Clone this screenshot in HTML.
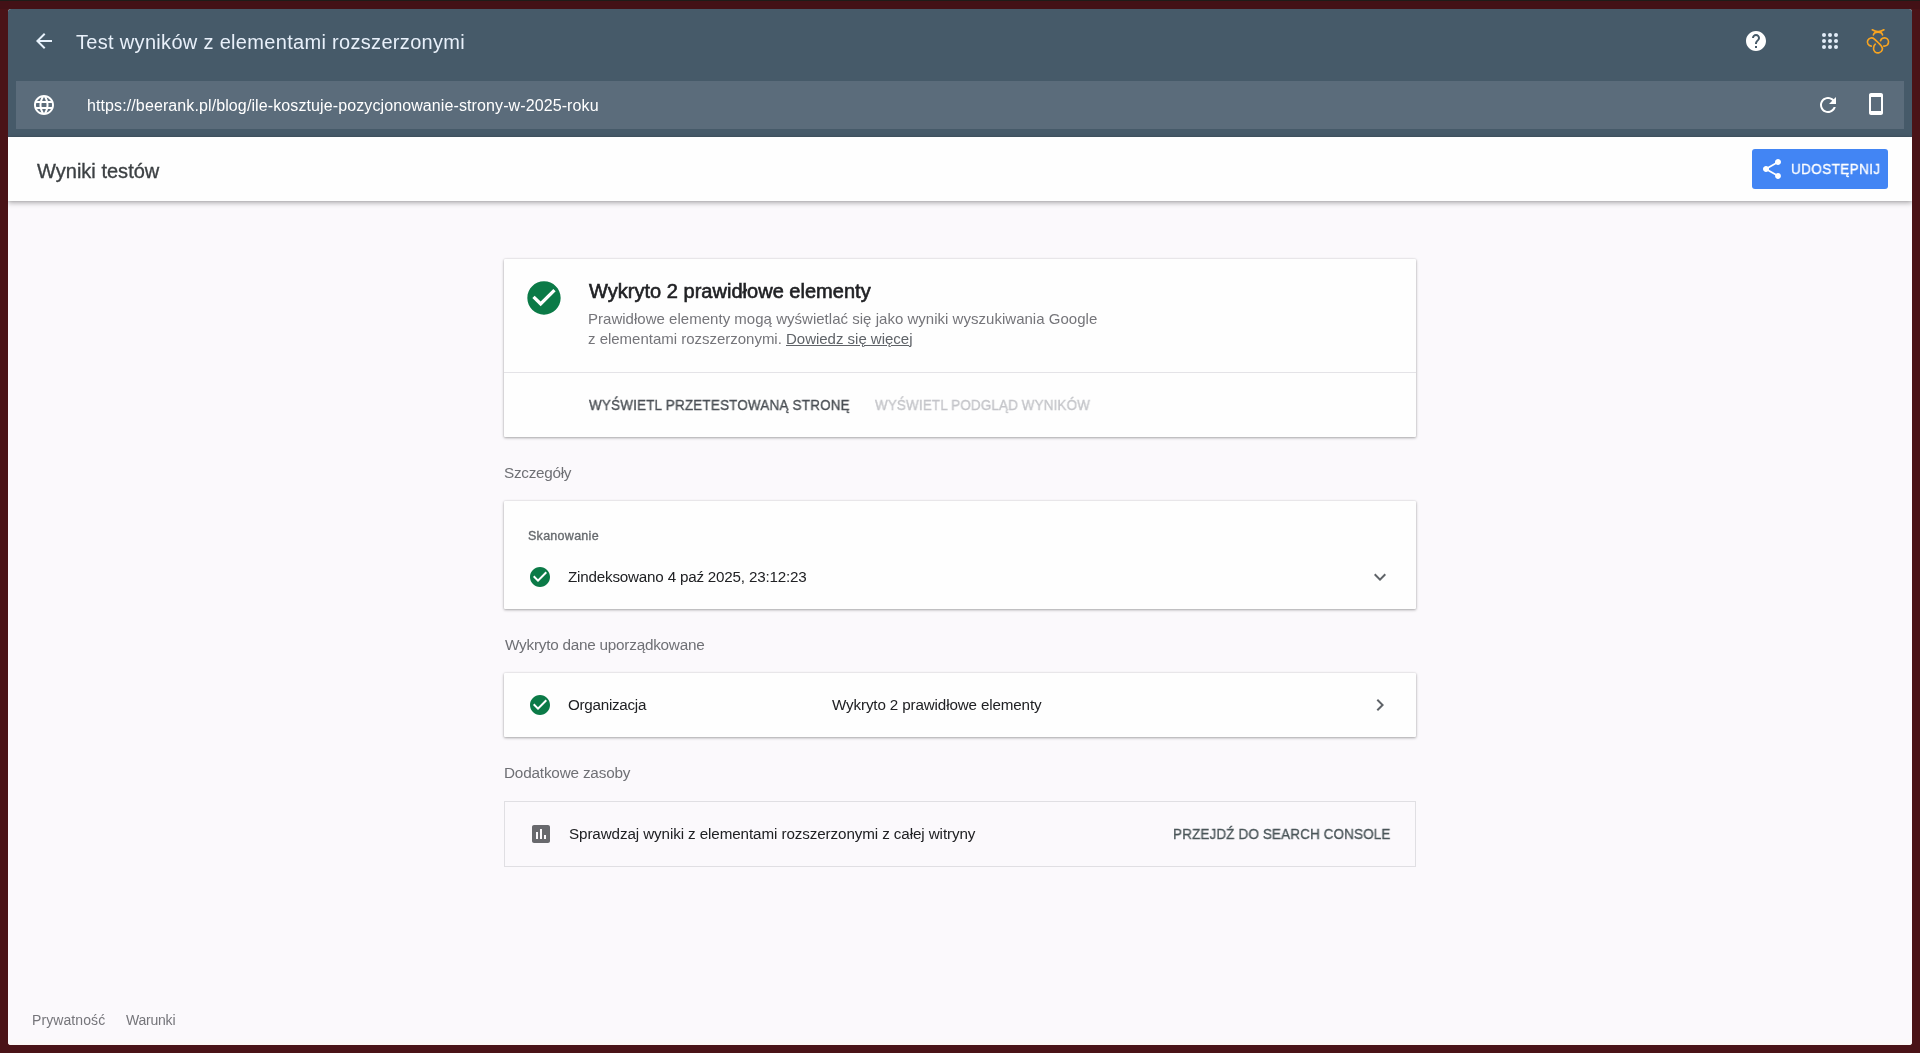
<!DOCTYPE html>
<html lang="pl">
<head>
<meta charset="utf-8">
<title>Test wyników z elementami rozszerzonymi</title>
<style>
*{box-sizing:border-box;margin:0;padding:0}
html,body{width:1920px;height:1053px;overflow:hidden}
body{background:#4a1317;font-family:"Liberation Sans",sans-serif;position:relative;color:#202124}
.topband{position:absolute;left:0;top:0;width:1920px;height:9px;background:#431116}
.topstrip{position:absolute;left:0;top:0;width:1920px;height:1px;background:#1e1c18}
.botwarm{position:absolute;left:0;top:1030px;width:1904px;height:6px;background:linear-gradient(#fbf9fb,#fcf8f5)}
.page{position:absolute;left:8px;top:9px;width:1904px;height:1036px;background:#fbf9fc;border-radius:3px;overflow:hidden}
.abs{position:absolute;white-space:nowrap;line-height:1;will-change:transform}
.hdr{position:absolute;left:0;top:0;width:1904px;height:128px;background:#465a69}
.urlbar{position:absolute;left:8px;top:72px;width:1888px;height:48px;background:#5b6c7b}
.sub{position:absolute;left:0;top:128px;width:1904px;height:64px;background:#fefefe;box-shadow:0 2px 5px rgba(0,0,0,.3),0 0 2px rgba(0,0,0,.12)}
.btn{position:absolute;left:1744px;top:140px;width:136px;height:40px;background:#4285f4;border-radius:3px}
.card{position:absolute;left:496px;width:912px;background:#fefefe;border-radius:1px;box-shadow:0 1px 3px rgba(0,0,0,.32),0 0 2px rgba(0,0,0,.12)}
.flat{position:absolute;left:496px;width:912px;border:1px solid #e0dfe3;background:#fbf9fc}
svg{position:absolute;display:block;overflow:visible}
.med{-webkit-text-stroke:.35px currentColor}
.med2{-webkit-text-stroke:.6px currentColor}
</style>
</head>
<body>
<div class="topband"></div><div class="topstrip"></div>
<div class="page">
  <div class="botwarm"></div>
  <div class="hdr"></div>
  <div class="urlbar"></div>
  <div class="sub"></div>
  <div class="btn"></div>

  <!-- header icons (coords relative to .page: x-8, y-9) -->
  <svg style="left:24px;top:20px" width="24" height="24" viewBox="0 0 24 24"><path fill="#e8f2fc" d="M20 11H7.83l5.59-5.59L12 4l-8 8 8 8 1.41-1.41L7.83 13H20v-2z"/></svg>
  <div class="abs" id="t1" style="left:68px;top:23px;font-size:20px;color:#e8f0fa;letter-spacing:0.315px">Test wyników z elementami rozszerzonymi</div>

  <svg style="left:1736px;top:20px" width="24" height="24" viewBox="0 0 24 24"><path fill="#fff" d="M12 2C6.48 2 2 6.48 2 12s4.48 10 10 10 10-4.48 10-10S17.520 2 12 2zm1 17h-2v-2h2v2zm2.070-7.750l-.9.92C13.450 12.900 13 13.500 13 15h-2v-.5c0-1.100.45-2.100 1.170-2.830l1.240-1.260c.37-.36.59-.86.59-1.410 0-1.100-.9-2-2-2s-2 .9-2 2H8c0-2.210 1.790-4 4-4s4 1.790 4 4c0 .88-.36 1.680-.93 2.250z"/></svg>
  <svg style="left:1810px;top:20px" width="24" height="24" viewBox="0 0 24 24" fill="#e3edf8"><circle cx="6" cy="6" r="2"/><circle cx="12" cy="6" r="2"/><circle cx="18" cy="6" r="2"/><circle cx="6" cy="12" r="2"/><circle cx="12" cy="12" r="2"/><circle cx="18" cy="12" r="2"/><circle cx="6" cy="18" r="2"/><circle cx="12" cy="18" r="2"/><circle cx="18" cy="18" r="2"/></svg>
  <!-- bee avatar -->
  <svg id="bee" style="left:1850px;top:13px" width="40" height="40" viewBox="0 0 40 40" fill="none" stroke="#f8a420" stroke-width="1.650" stroke-linecap="round" stroke-linejoin="round"><path d="M14.300 7.800Q20 11.600 25.900 7.800"/><path d="M15.400 12.900Q16 10.100 20 10.100Q24 10.100 24.500 12.900"/><path d="M13.300 24.090A4.100 4.100 0 1 1 16.400 17.100C18.500 19.200 22 22 23.360 24.160A4.450 4.100 0 1 1 15.570 26.090C15.700 24.500 16.300 23 17.300 22.200"/><path d="M22.550 18.600A4.100 4.100 0 1 1 25.700 24.040"/></svg>

  <svg style="left:24px;top:84px" width="24" height="24" viewBox="0 0 24 24"><path fill="#fff" d="M11.990 2C6.470 2 2 6.480 2 12s4.470 10 9.990 10C17.520 22 22 17.520 22 12S17.520 2 11.990 2zm6.930 6h-2.950c-.32-1.250-.78-2.450-1.380-3.560 1.840.63 3.370 1.910 4.330 3.560zM12 4.040c.83 1.200 1.480 2.530 1.910 3.960h-3.820c.43-1.430 1.080-2.760 1.910-3.960zM4.260 14C4.100 13.360 4 12.690 4 12s.1-1.360.26-2h3.380c-.08.66-.14 1.320-.14 2 0 .68.06 1.340.14 2H4.260zm.82 2h2.950c.32 1.250.78 2.450 1.380 3.560-1.840-.63-3.370-1.900-4.330-3.560zm2.950-8H5.080c.96-1.660 2.490-2.930 4.330-3.560C8.810 5.550 8.350 6.750 8.030 8zM12 19.960c-.83-1.200-1.480-2.530-1.910-3.960h3.820c-.43 1.430-1.080 2.760-1.910 3.960zM14.340 14H9.660c-.09-.66-.16-1.320-.16-2 0-.68.07-1.350.16-2h4.680c.09.65.16 1.320.16 2 0 .68-.07 1.340-.16 2zm.25 5.560c.6-1.110 1.060-2.310 1.380-3.560h2.950c-.96 1.650-2.490 2.930-4.330 3.560zM16.360 14c.08-.66.14-1.320.14-2 0-.68-.06-1.340-.14-2h3.380c.16.64.26 1.310.26 2s-.1 1.360-.26 2h-3.380z"/></svg>
  <div class="abs" id="t2" style="left:79px;top:89px;font-size:16px;color:#ffffff;letter-spacing:0.106px">https://beerank.pl/blog/ile-kosztuje-pozycjonowanie-strony-w-2025-roku</div>
  <svg style="left:1808px;top:84px" width="24" height="24" viewBox="0 0 24 24"><path fill="#fff" d="M17.650 6.350C16.200 4.900 14.210 4 12 4c-4.420 0-7.990 3.580-7.990 8s3.570 8 7.990 8c3.730 0 6.840-2.550 7.730-6h-2.080c-.82 2.330-3.040 4-5.650 4-3.310 0-6-2.690-6-6s2.690-6 6-6c1.660 0 3.140.69 4.220 1.780L13 11h7V4l-2.350 2.350z"/></svg>
  <svg style="left:1856px;top:83px" width="24" height="24" viewBox="0 0 24 24"><path fill="#fff" d="M17 1.010L7 1c-1.100 0-1.990.9-1.990 2v18c0 1.100.89 2 1.990 2h10c1.100 0 2-.9 2-2V3c0-1.100-.9-1.990-2-1.990zM17 19H7V5h10v14z"/></svg>

  <div class="abs med" id="t3" style="left:29px;top:152px;font-size:20px;color:#3c4043;letter-spacing:0.019px">Wyniki testów</div>
  <svg style="left:1751.500px;top:148px" width="24" height="24" viewBox="0 0 24 24"><path fill="#fff" d="M18 16.080c-.76 0-1.440.3-1.960.77L8.910 12.700c.05-.23.09-.46.09-.7s-.04-.47-.09-.7l7.050-4.110c.54.5 1.250.81 2.040.81 1.660 0 3-1.340 3-3s-1.340-3-3-3-3 1.340-3 3c0 .24.04.47.09.7L8.040 9.810C7.500 9.310 6.790 9 6 9c-1.660 0-3 1.340-3 3s1.340 3 3 3c.79 0 1.500-.31 2.040-.81l7.120 4.160c-.05.21-.08.43-.08.65 0 1.610 1.310 2.920 2.920 2.920 1.610 0 2.920-1.310 2.920-2.920s-1.310-2.920-2.920-2.920z"/></svg>
  <div class="abs med" id="t4" style="left:1783px;top:153px;font-size:14.6px;color:#ffffff;letter-spacing:0.491px;transform:scaleX(0.92);transform-origin:0 0">UDOSTĘPNIJ</div>

  <!-- main card -->
  <div class="card" style="top:250px;height:178px"></div>
  <div style="position:absolute;left:496px;top:363px;width:912px;height:1px;background:#e4e3e7"></div>
  <svg style="left:516px;top:268.900px" width="40" height="40" viewBox="0 0 24 24"><circle cx="12" cy="12" r="8" fill="#fff"/><path fill="#0b7a47" d="M12 2C6.480 2 2 6.480 2 12s4.480 10 10 10 10-4.480 10-10S17.520 2 12 2zm-2 15l-5-5 1.410-1.410L10 14.170l7.590-7.590L19 8l-9 9z"/></svg>
  <div class="abs med2" id="t5" style="left:581px;top:272px;font-size:20px;color:#202124;letter-spacing:0.023px">Wykryto 2 prawidłowe elementy</div>
  <div class="abs" id="t6" style="left:580px;top:302px;font-size:15px;color:#75757a;letter-spacing:0.022px">Prawidłowe elementy mogą wyświetlać się jako wyniki wyszukiwania Google</div>
  <div class="abs" id="t7" style="left:580px;top:322px;font-size:15px;color:#75757a;letter-spacing:-0.014px">z elementami rozszerzonymi. <span id="t7b" style="text-decoration:underline;color:#5f6368">Dowiedz się więce<span style="letter-spacing:0">j</span></span></div>
  <div class="abs med" id="t8" style="left:581px;top:389px;font-size:14.6px;color:#4a4f54;letter-spacing:0.232px;transform:scaleX(0.92);transform-origin:0 0">WYŚWIETL PRZETESTOWANĄ STRONĘ</div>
  <div class="abs med" id="t9" style="left:867px;top:389px;font-size:14.6px;color:#c4c5c9;letter-spacing:0.166px;transform:scaleX(0.92);transform-origin:0 0">WYŚWIETL PODGLĄD WYNIKÓW</div>

  <div class="abs" id="t10" style="left:496px;top:456px;font-size:15.3px;color:#6f7075;letter-spacing:-0.283px">Szczegóły</div>
  <div class="card" style="top:492px;height:108px"></div>
  <div class="abs med" id="t11" style="left:520px;top:521px;font-size:12.5px;color:#666a6e;letter-spacing:0.278px">Skanowanie</div>
  <svg style="left:520px;top:556px" width="24" height="24" viewBox="0 0 24 24"><circle cx="12" cy="12" r="8" fill="#fff"/><path fill="#0b7a47" d="M12 2C6.480 2 2 6.480 2 12s4.480 10 10 10 10-4.480 10-10S17.520 2 12 2zm-2 15l-5-5 1.410-1.410L10 14.170l7.590-7.590L19 8l-9 9z"/></svg>
  <div class="abs" id="t12" style="left:560px;top:560px;font-size:15.2px;color:#202124;letter-spacing:-0.193px">Zindeksowano 4 paź 2025, 23:12:23</div>
  <svg style="left:1360px;top:556px" width="24" height="24" viewBox="0 0 24 24"><path fill="#5f6368" d="M16.590 8.590L12 13.170 7.410 8.590 6 10l6 6 6-6z"/></svg>

  <div class="abs" id="t13" style="left:497px;top:628px;font-size:15.3px;color:#6f7075;letter-spacing:-0.237px">Wykryto dane uporządkowane</div>
  <div class="card" style="top:664px;height:64px"></div>
  <svg style="left:520px;top:684px" width="24" height="24" viewBox="0 0 24 24"><circle cx="12" cy="12" r="8" fill="#fff"/><path fill="#0b7a47" d="M12 2C6.480 2 2 6.480 2 12s4.480 10 10 10 10-4.480 10-10S17.520 2 12 2zm-2 15l-5-5 1.410-1.410L10 14.170l7.590-7.590L19 8l-9 9z"/></svg>
  <div class="abs" id="t14" style="left:560px;top:688px;font-size:15.2px;color:#202124;letter-spacing:-0.262px">Organizacja</div>
  <div class="abs" id="t15" style="left:824px;top:688px;font-size:15.2px;color:#202124;letter-spacing:-0.137px">Wykryto 2 prawidłowe elementy</div>
  <svg style="left:1360px;top:684px" width="24" height="24" viewBox="0 0 24 24"><path fill="#5f6368" d="M10 6L8.590 7.410 13.170 12l-4.580 4.590L10 18l6-6z"/></svg>

  <div class="abs" id="t16" style="left:496px;top:756px;font-size:15.3px;color:#6f7075;letter-spacing:-0.188px">Dodatkowe zasoby</div>
  <div class="flat" style="top:792px;height:66px"></div>
  <svg style="left:521px;top:813px" width="24" height="24" viewBox="0 0 24 24"><path fill="#68696d" d="M19 3H5c-1.100 0-2 .9-2 2v14c0 1.100.9 2 2 2h14c1.100 0 2-.9 2-2V5c0-1.100-.9-2-2-2zM9 17H7v-7h2v7zm4 0h-2V7h2v10zm4 0h-2v-4h2v4z"/></svg>
  <div class="abs" id="t17" style="left:561px;top:817px;font-size:15.2px;color:#202124;letter-spacing:-0.094px">Sprawdzaj wyniki z elementami rozszerzonymi z całej witryny</div>
  <div class="abs med" id="t18" style="left:1165px;top:818px;font-size:14.6px;color:#4a5558;letter-spacing:0.184px;transform:scaleX(0.92);transform-origin:0 0">PRZEJDŹ DO SEARCH CONSOLE</div>

  <div class="abs" id="t19" style="left:24px;top:1004px;font-size:14px;color:#75757a;letter-spacing:0.091px">Prywatność</div>
  <div class="abs" id="t20" style="left:118px;top:1004px;font-size:14px;color:#75757a;letter-spacing:-0.219px">Warunki</div>
</div>
</body>
</html>
